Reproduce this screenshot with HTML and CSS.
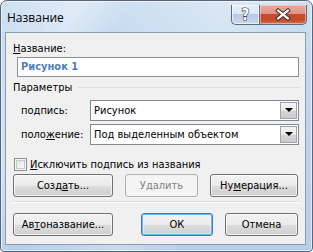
FILE: index.html
```html
<!DOCTYPE html>
<html lang="ru">
<head>
<meta charset="utf-8">
<title>Название</title>
<link rel="stylesheet" href="styles.css">
</head>
<body>
<div class="window">
  <div class="titlebar">
    <div class="title">Название</div>
    <div class="caption-btns">
      <div class="cbtn help">
        <svg width="27" height="19" viewBox="0 0 27 19">
          <text x="13.5" y="15" text-anchor="middle" class="qmark">?</text>
        </svg>
      </div>
      <div class="cbtn close">
        <svg width="47" height="19" viewBox="0 0 47 19">
          <path d="M18.5 5.5 L28.5 13.5 M28.5 5.5 L18.5 13.5" stroke="#3a2a28" stroke-width="4.2" stroke-linecap="square" fill="none"/>
          <path d="M18.5 5.5 L28.5 13.5 M28.5 5.5 L18.5 13.5" stroke="#ffffff" stroke-width="2.2" stroke-linecap="square" fill="none"/>
        </svg>
      </div>
    </div>
  </div>
  <div class="client">
    <div class="label"><u>Н</u>азвание:</div>
    <div class="input">Рисунок 1</div>
    <div class="group"><span class="group-title">Параметры</span><span class="group-line"></span></div>
    <div class="field-row">
      <div class="field-label">по<u>д</u>пись:</div>
      <div class="select"><span class="select-text">Рисунок</span><span class="drop"><span class="arrow"></span></span></div>
    </div>
    <div class="field-row second">
      <div class="field-label">поло<u>ж</u>ение:</div>
      <div class="select"><span class="select-text">Под выделенным объектом</span><span class="drop"><span class="arrow"></span></span></div>
    </div>
    <div class="check-row">
      <span class="checkbox"></span>
      <span class="check-text"><u>И</u>сключить подпись из названия</span>
    </div>
    <div class="btn-row">
      <div class="btn w100">Созд<u>а</u>ть...</div>
      <div class="btn w73 disabled">Удалить</div>
      <div class="btn w88">Ну<u>м</u>ерация...</div>
    </div>
    <div class="sep"></div>
    <div class="btn-row bottom">
      <div class="btn w100">Ав<u>т</u>оназвание...</div>
      <div class="btn-group">
        <div class="btn w72 default">ОК</div>
        <div class="btn w73">Отмена</div>
      </div>
    </div>
  </div>
</div>
</body>
</html>
```

FILE: styles.css
```css
html, body {
  margin: 0;
  padding: 0;
  background: #ffffff;
}
body {
  width: 313px;
  height: 252px;
  overflow: hidden;
}
.window {
  box-sizing: border-box;
  width: 313px;
  height: 252px;
  border: 1px solid #566579;
  border-radius: 7px 7px 4px 4px;
  background:
    linear-gradient(115deg, rgba(255,255,255,0) 0%, rgba(255,255,255,0.35) 18%, rgba(255,255,255,0) 30%, rgba(255,255,255,0.25) 55%, rgba(255,255,255,0) 70%),
    linear-gradient(to bottom, #cfe0f2 0%, #c6dbf0 15%, #bcd3ec 60%, #b6cfea 100%);
  box-shadow: inset 0 0 0 1px rgba(255,255,255,0.55);
  display: flex;
  flex-direction: column;
  font-family: "DejaVu Sans Condensed", "DejaVu Sans", sans-serif;
  font-stretch: condensed;
  font-size: 11px;
  line-height: 13px;
  color: #000;
}
.titlebar {
  height: 31px;
  display: flex;
  align-items: flex-start;
  justify-content: space-between;
  flex: none;
}
.title {
  font-family: "Open Sans", "Noto Sans", sans-serif;
  font-stretch: normal;
  font-size: 12px;
  line-height: 16px;
  margin: 9px 0 0 6px;
  color: #000;
}
.caption-btns {
  display: flex;
  margin: 4px 5px 0 0;
}
.cbtn {
  box-sizing: border-box;
  height: 20px;
  border: 1px solid #5e6b7e;
  border-top: none;
  display: flex;
  align-items: flex-start;
}
.help {
  width: 28px;
  border-right: none;
  border-radius: 0 0 0 5px;
  background: linear-gradient(to bottom, #e4eef8 0%, #dbe7f3 45%, #b7cbe0 50%, #c7d8ea 100%);
  box-shadow: inset 0 0 0 1px rgba(255,255,255,0.6);
}
.close {
  width: 48px;
  border-radius: 0 0 5px 0;
  background: linear-gradient(to bottom, #e9a99b 0%, #e19483 45%, #c94b2f 50%, #c44a2c 80%, #d9714f 100%);
  box-shadow: inset 0 0 0 1px rgba(255,230,220,0.5);
}
.qmark {
  font-family: "DejaVu Sans", sans-serif;
  font-weight: bold;
  font-size: 15px;
  fill: #ffffff;
  stroke: #3f4a5a;
  stroke-width: 1.2px;
  paint-order: stroke;
}
.client {
  box-sizing: border-box;
  height: 213px;
  margin: 0 6px 0 4px;
  border: 1px solid #8d9bb0;
  background: #f0f0f0;
  padding: 9px 6px 0 7px;
  display: flex;
  flex-direction: column;
  flex: none;
}
u {
  text-decoration: underline;
  text-underline-offset: 1px;
  text-decoration-thickness: 1px;
}
.label {
  height: 13px;
}
.input {
  box-sizing: border-box;
  height: 20px;
  margin: 2px 0 0 4px;
  border: 1px solid #8f9196;
  background: #fff;
  padding: 2px 0 0 3px;
  font-weight: bold;
  color: #4f81bd;
}
.group {
  margin-top: 4px;
  height: 13px;
  display: flex;
  align-items: center;
}
.group-title {
  flex: none;
}
.group-line {
  flex: 1;
  height: 1px;
  margin-left: 6px;
  background: #d5dfe5;
}
.field-row {
  margin-top: 6px;
  height: 21px;
  display: flex;
  align-items: center;
}
.field-row.second {
  margin-top: 3px;
}
.field-label {
  box-sizing: border-box;
  width: 77px;
  padding-left: 8px;
  flex: none;
}
.select {
  box-sizing: border-box;
  flex: 1;
  height: 21px;
  border: 1px solid #828790;
  background: #fff;
  display: flex;
  align-items: center;
  justify-content: space-between;
  padding: 0 1px 0 3px;
}
.drop {
  box-sizing: border-box;
  width: 17px;
  height: 17px;
  border: 1px solid #9aa3ad;
  background: linear-gradient(to bottom, #f4f4f4 0%, #e8e8e8 50%, #d5d5d5 51%, #cbcbcb 100%);
  display: flex;
  justify-content: center;
  padding-top: 5px;
}
.arrow {
  width: 0;
  height: 0;
  border-left: 4px solid transparent;
  border-right: 4px solid transparent;
  border-top: 4px solid #000;
}
.check-row {
  margin-top: 13px;
  height: 13px;
  display: flex;
  align-items: center;
}
.checkbox {
  box-sizing: border-box;
  width: 13px;
  height: 13px;
  margin-left: 1px;
  border: 1px solid #8e8f8f;
  background: linear-gradient(135deg, #dcdcdc 0%, #f4f4f4 70%, #ffffff 100%);
  box-shadow: inset 0 0 0 1px #f4f4f4, inset 0 0 0 2px #c8c8c8;
  flex: none;
}
.check-text {
  margin-left: 3px;
}
.btn-row {
  margin-top: 3px;
  height: 23px;
  display: flex;
  justify-content: space-between;
  padding-right: 1px;
}
.btn-row.bottom {
  margin-top: 10px;
}
.btn-group {
  display: flex;
  gap: 12px;
}
.btn {
  box-sizing: border-box;
  height: 23px;
  border: 1px solid #707070;
  border-radius: 3px;
  background: linear-gradient(to bottom, #f2f2f2 0%, #ebebeb 50%, #dddddd 51%, #cfcfcf 100%);
  box-shadow: inset 0 0 0 1px rgba(255,255,255,0.7);
  display: flex;
  align-items: center;
  justify-content: center;
}
.btn.disabled {
  border-color: #adb2b5;
  background: #f4f4f4;
  box-shadow: none;
  color: #838383;
}
.btn.default {
  border-color: #3c7fb1;
  box-shadow: inset 0 0 0 1px #5fbdee, inset 0 0 0 2px rgba(255,255,255,0.4);
}
.w100 { width: 100px; }
.w73 { width: 73px; }
.w72 { width: 72px; }
.w88 { width: 88px; }
.sep {
  margin-top: 4px;
  height: 1px;
  border-bottom: 1px solid #ffffff;
  background: #d5dfe5;
  flex: none;
}
```
